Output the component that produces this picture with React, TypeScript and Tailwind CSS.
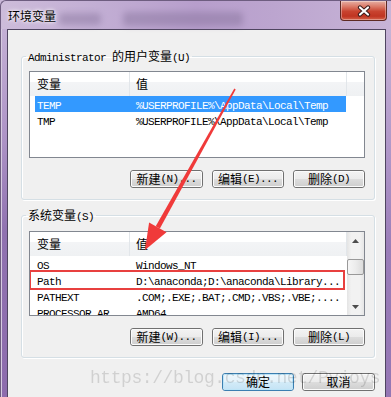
import React from "react";

const MONO = "font-['Liberation_Mono',monospace] text-[11px] tracking-[-0.6px]";
const CJK = "font-['Noto_Sans_CJK_SC',sans-serif] text-[12px]";

function T({ s }: { s: string }) {
  const parts = s.match(/[\u3000-\u9fff]+|[^\u3000-\u9fff]+/g) || [];
  return (
    <>
      {parts.map((p, i) =>
        /[\u3000-\u9fff]/.test(p) ? (
          <span key={i} className={CJK}>
            {p}
          </span>
        ) : (
          <span key={i} className={MONO}>
            {p}
          </span>
        )
      )}
    </>
  );
}

function Btn({ label, w, def }: { label: string; w: string; def?: boolean }) {
  return (
    <div
      className={`h-[18px] ${w} shrink-0 rounded-[3px] border ${
        def ? "border-[#3c7fb1]" : "border-[#707070]"
      }`}
    >
      <div
        className={`flex h-full w-full items-center justify-center rounded-[2px] border leading-[14px] text-black ${
          def
            ? "border-[#bde4f7] bg-[linear-gradient(180deg,#eef7fc_0%,#e4f2fa_50%,#d3ebf8_50%,#c6e4f5_100%)]"
            : "border-[#fbfbfb] bg-[linear-gradient(180deg,#f2f2f2_0%,#ebebeb_50%,#dddddd_50%,#d0d0d0_100%)]"
        }`}
      >
        <T s={label} />
      </div>
    </div>
  );
}

function Header({ extra }: { extra: boolean }) {
  return (
    <div className="flex h-[24px] shrink-0 bg-[linear-gradient(180deg,#ffffff_0%,#ffffff_42%,#f3f4f6_43%,#eff1f3_100%)] leading-[14px]">
      <div className="flex w-[100px] shrink-0 items-center border-r border-[#e2e6ea] pl-[7px]">
        <T s="变量" />
      </div>
      <div className="flex w-[217px] shrink-0 items-center border-r border-[#e2e6ea] pl-[6px]">
        <T s="值" />
      </div>
      {extra && <div className="flex-1" />}
    </div>
  );
}

function Row({ a, b, sel }: { a: string; b: string; sel?: boolean }) {
  return (
    <div
      className={`ml-[5px] flex h-[16px] w-[311px] shrink-0 items-center whitespace-nowrap leading-[16px] ${
        sel ? "bg-[#3399ff] text-white" : "text-black"
      }`}
    >
      <div className="w-[95px] shrink-0 overflow-hidden pl-[2px]">
        <span className={MONO}>{a}</span>
      </div>
      <div className="w-[216px] shrink-0 overflow-hidden pl-[6px]">
        <span className={MONO}>{b}</span>
      </div>
    </div>
  );
}

function Group({
  legend,
  children,
  className,
}: {
  legend: string;
  children: React.ReactNode;
  className: string;
}) {
  return (
    <fieldset
      className={`w-[354px] rounded-[3px] border border-[#d5dfe5] px-0 pb-[11px] shadow-[inset_1px_1px_0_#ffffff,1px_1px_0_#ffffff] ${className}`}
    >
      <legend className="ml-[4px] px-[2px] leading-[14px] text-black">
        <T s={legend} />
      </legend>
      <div className="pl-[7px]">{children}</div>
    </fieldset>
  );
}

function Buttons({ labels }: { labels: string[] }) {
  return (
    <div className="mt-[12px] flex w-[336px] justify-end gap-[9px]">
      <Btn label={labels[0]} w="w-[73px]" />
      <Btn label={labels[1]} w="w-[72px]" />
      <Btn label={labels[2]} w="w-[72px]" />
    </div>
  );
}

export default function App() {
  return (
    <div className="relative h-[397px] w-[391px] overflow-hidden bg-[#c9b7d8]">
      <div className="flex h-full w-full flex-col rounded-tl-[6px] border-l border-t border-[#6e5d80] bg-[linear-gradient(90deg,#cdbcda_0%,#c2aed4_25%,#b79ecc_50%,#bca5cf_70%,#c7b4d7_100%)]">
        {/* title bar */}
        <div className="relative flex h-[28px] shrink-0">
          <div className="absolute left-[58px] top-[12px] h-[12px] w-[42px] rounded-[4px] bg-[#7d6a92] opacity-40 blur-[3px]" />
          <div className="absolute left-[122px] top-[11px] h-[14px] w-[120px] rounded-[4px] bg-[#7d6a92] opacity-40 blur-[3px]" />
          <div className="relative flex items-center pl-[7px] pt-[1px] font-['Noto_Sans_CJK_SC',sans-serif] text-[12px] leading-[14px] text-black [text-shadow:0_0_5px_#ffffff,0_0_3px_#ffffff]">
            环境变量
          </div>
          <div className="flex-1" />
          <div className="mr-[4px] flex h-[20px] w-[47px] items-center justify-center rounded-b-[4px] border border-t-0 border-[#5e2a24] bg-[linear-gradient(180deg,#e6b0a5_0%,#da7866_30%,#c8432f_55%,#c03522_80%,#d5624a_100%)] shadow-[inset_0_0_0_1px_rgba(255,255,255,0.35)]">
            <svg width="14" height="12" viewBox="0 0 14 12">
              <path d="M3 2.5 L11 9.5 M11 2.5 L3 9.5" stroke="#3a1c1c" strokeWidth="4.2" strokeLinecap="round" />
              <path d="M3 2.5 L11 9.5 M11 2.5 L3 9.5" stroke="#ffffff" strokeWidth="2.2" strokeLinecap="round" />
            </svg>
          </div>
        </div>
        {/* body */}
        <div className="flex min-h-0 flex-1">
          <div className="w-[6px] shrink-0 border-l border-[#d6cbe0] bg-[linear-gradient(180deg,#c4b0d5_0%,#ad93c6_30%,#9072b0_55%,#8d6cad_100%)]" />
          <div className="w-[379px] shrink-0 border-l border-r border-t border-[#4f4560] bg-[#f0f0f0] pl-[13px]">
            <Group legend="Administrator 的用户变量(U)" className="mt-[18px] pt-[6px]">
              <div className="relative flex h-[87px] w-[336px] flex-col overflow-hidden border border-[#828790] bg-white">
                <Header extra />
                <Row a="TEMP" b="%USERPROFILE%\AppData\Local\Temp" sel />
                <Row a="TMP" b="%USERPROFILE%\AppData\Local\Temp" />
              </div>
              <Buttons labels={["新建(N)...", "编辑(E)...", "删除(D)"]} />
            </Group>
            <Group legend="系统变量(S)" className="mt-[7px] pt-[7px]">
              <div className="relative flex h-[85px] w-[336px] overflow-hidden border border-[#828790] bg-white">
                <div className="flex w-[317px] shrink-0 flex-col">
                  <Header extra={false} />
                  <Row a="OS" b="Windows_NT" />
                  <Row a="Path" b="D:\anaconda;D:\anaconda\Library..." />
                  <Row a="PATHEXT" b=".COM;.EXE;.BAT;.CMD;.VBS;.VBE;...." />
                  <Row a="PROCESSOR_AR..." b="AMD64" />
                </div>
                <div className="flex w-[17px] shrink-0 flex-col bg-[linear-gradient(90deg,#e4e4e4_0%,#f2f2f2_25%,#f2f2f2_75%,#e6e6e6_100%)]">
                  <div className="flex h-[17px] shrink-0 items-center justify-center">
                    <svg width="7" height="4" viewBox="0 0 7 4">
                      <path d="M3.5 0 L7 4 L0 4 Z" fill="#4d4d4d" />
                    </svg>
                  </div>
                  <div className="mx-[0px] mt-[10px] h-[16px] shrink-0 rounded-[2px] border border-[#999999] bg-[linear-gradient(90deg,#f6f6f6_0%,#ececec_50%,#dcdcdc_100%)]" />
                  <div className="flex-1" />
                  <div className="flex h-[17px] shrink-0 items-center justify-center">
                    <svg width="7" height="4" viewBox="0 0 7 4">
                      <path d="M0 0 L7 0 L3.5 4 Z" fill="#4d4d4d" />
                    </svg>
                  </div>
                </div>
                <div className="absolute left-[-1px] top-[38px] h-[20px] w-[316px] border-2 border-[#e8403f]" />
              </div>
              <Buttons labels={["新建(W)...", "编辑(I)...", "删除(L)"]} />
            </Group>
            <div className="mt-[15px] flex w-[354px] justify-end gap-[8px]">
              <Btn label="确定" w="w-[72px]" def />
              <Btn label="取消" w="w-[73px]" />
            </div>
          </div>
          <div className="w-[5px] shrink-0 bg-[linear-gradient(180deg,#c6b3d6_0%,#ae95c7_35%,#9a7db8_60%,#9577b4_100%)]" />
        </div>
      </div>

      {/* watermark */}
      <div className="pointer-events-none absolute left-[90px] top-[369px] whitespace-nowrap font-['Liberation_Mono',monospace] text-[18px] leading-[18px] tracking-[-0.44px] text-black opacity-[0.13]">
        https://blog.csdn.net/Pyjoys
      </div>

      {/* red arrow */}
      <svg className="pointer-events-none absolute left-0 top-0" width="391" height="397" viewBox="0 0 391 397">
        <polygon points="235.7,89.4 159.9,228.6 155.7,226.2 234.3,88.6" fill="#f03a3a" />
        <polygon points="145,250 149.1,222.5 166.5,232.3" fill="#f03a3a" />
      </svg>
    </div>
  );
}
